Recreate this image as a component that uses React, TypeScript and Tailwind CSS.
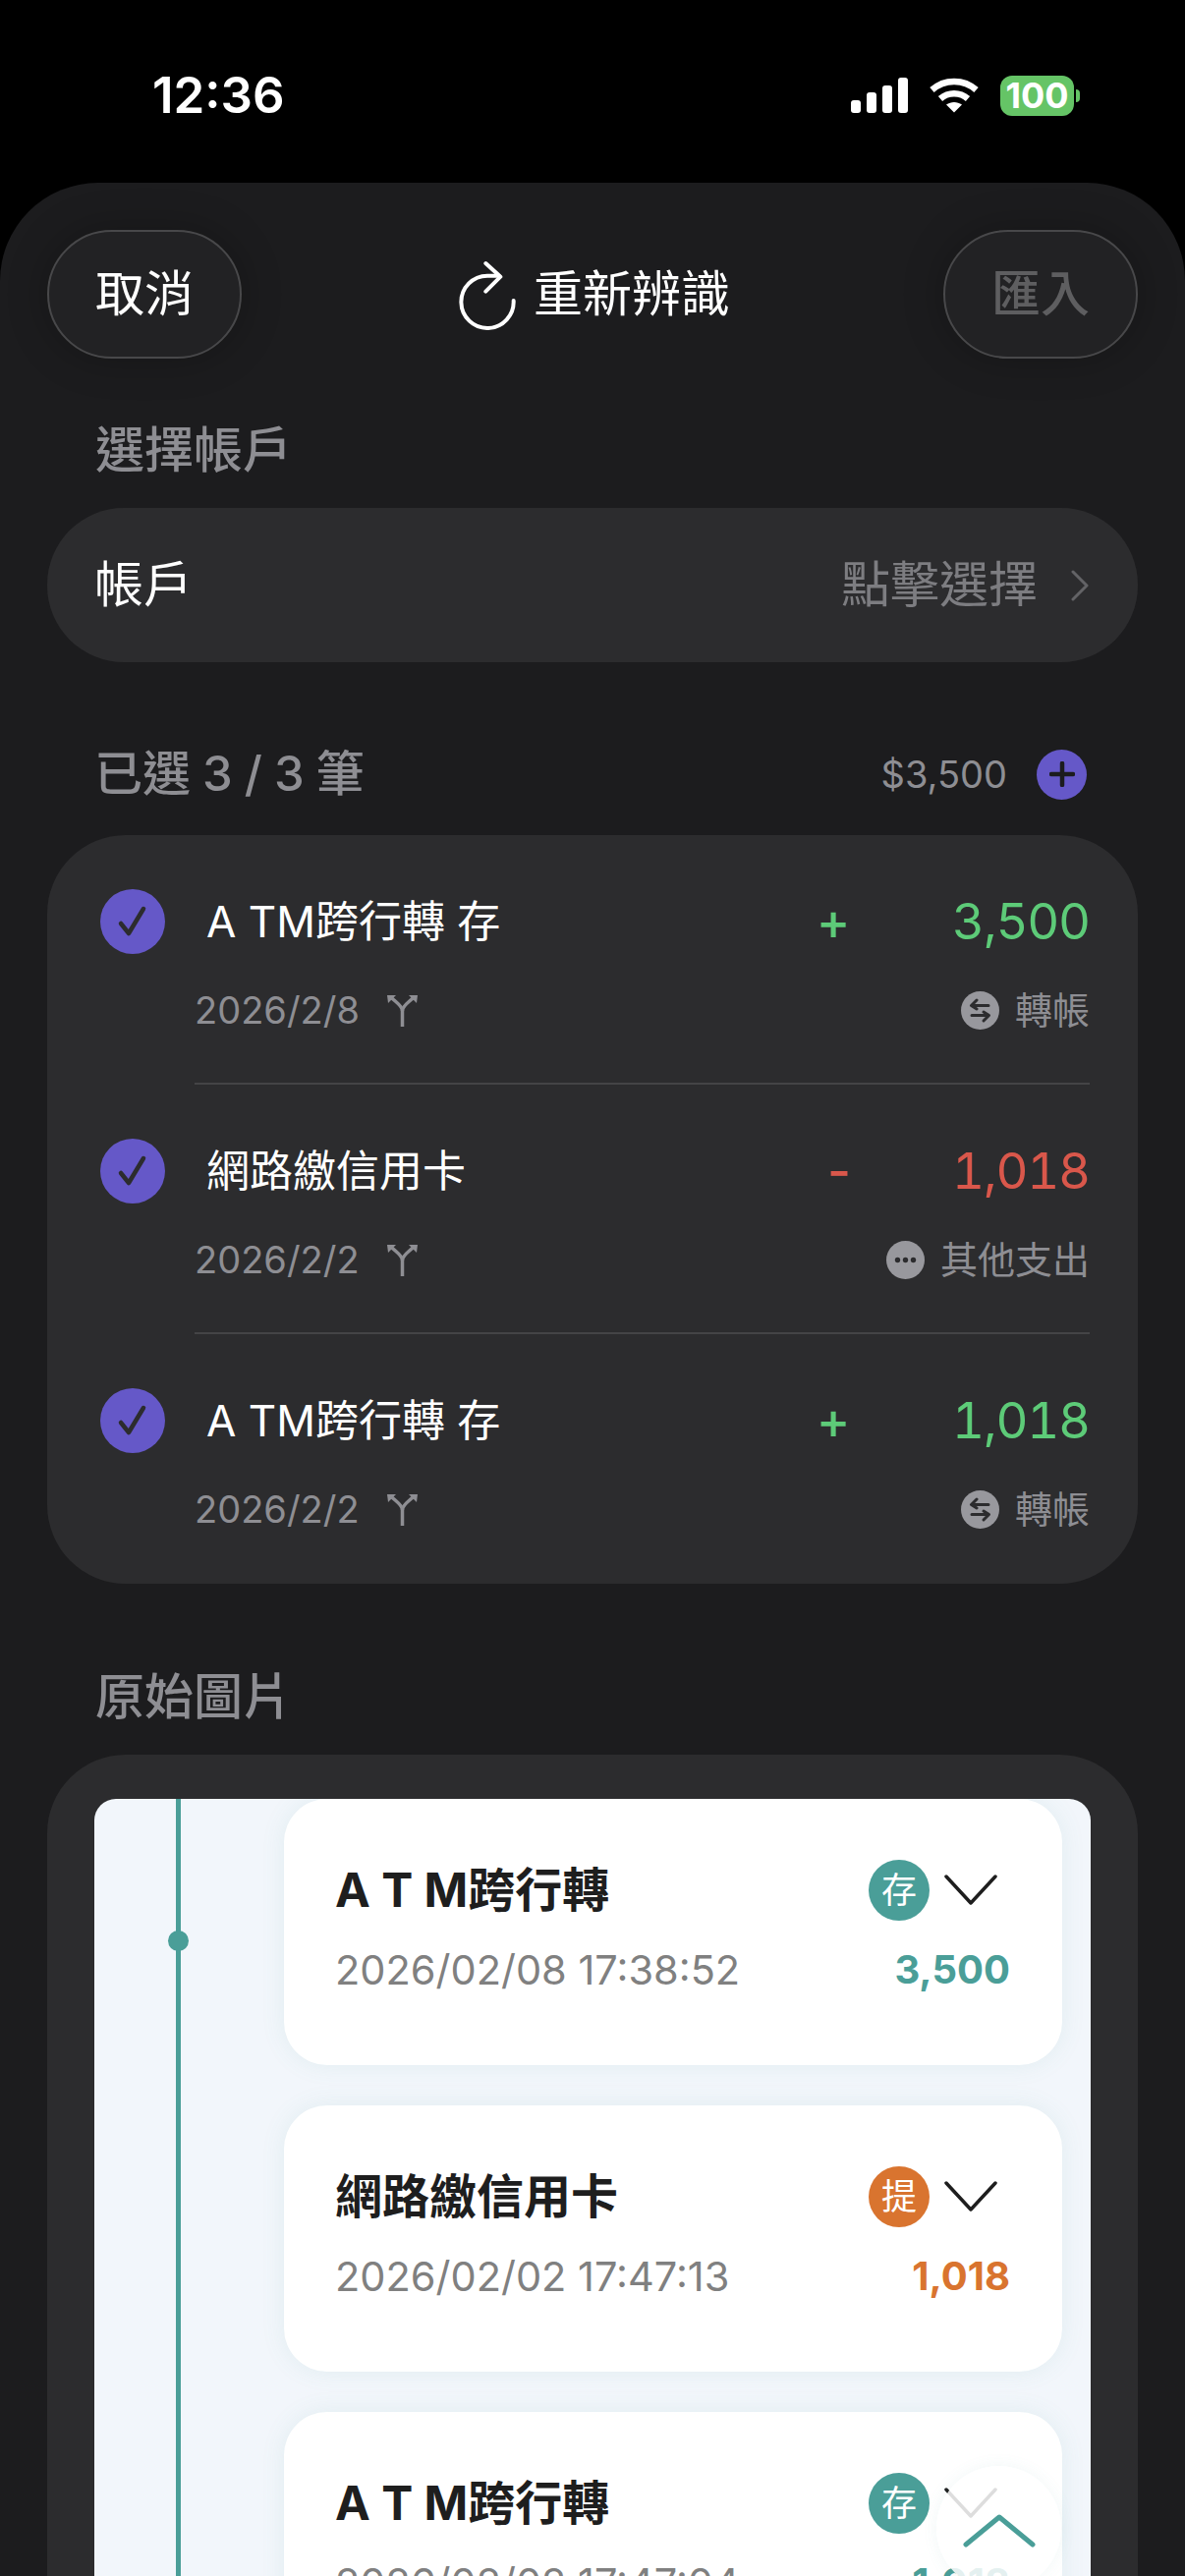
const font = { fontFamily: 'Inter, "Noto Sans CJK TC", sans-serif' };

interface RowData {
  title: string;
  date: string;
  sign: string;
  amount: string;
  tone: string;
  category: string;
  kind: 'transfer' | 'other';
}

const rows: RowData[] = [
  { title: 'A TM跨行轉 存', date: '2026/2/8', sign: '+', amount: '3,500', tone: 'text-[#5dcb78]', category: '轉帳', kind: 'transfer' },
  { title: '網路繳信用卡', date: '2026/2/2', sign: '-', amount: '1,018', tone: 'text-[#d9574b]', category: '其他支出', kind: 'other' },
  { title: 'A TM跨行轉 存', date: '2026/2/2', sign: '+', amount: '1,018', tone: 'text-[#5dcb78]', category: '轉帳', kind: 'transfer' },
];

const slips = [
  { title: 'A T M跨行轉', date: '2026/02/08 17:38:52', badge: '存', amount: '3,500', bg: 'bg-[#4a9e98]', tone: 'text-[#4a9e98]' },
  { title: '網路繳信用卡', date: '2026/02/02 17:47:13', badge: '提', amount: '1,018', bg: 'bg-[#d9742f]', tone: 'text-[#d9742f]' },
  { title: 'A T M跨行轉', date: '2026/02/02 17:47:04', badge: '存', amount: '1,018', bg: 'bg-[#4a9e98]', tone: 'text-[#4a9e98]' },
];

const StatusBar = () => (
  <div className="flex h-[186px] shrink-0 items-start justify-between bg-black pt-[64px] pr-[107px] pl-[155px]">
    <span className="text-[51px] leading-[66px] font-semibold text-white">12:36</span>
    <div className="flex h-[66px] items-center gap-[22px]">
      <svg width="58" height="36" viewBox="0 0 58 36" fill="#fff">
        <rect x="0" y="23" width="10" height="13" rx="3" />
        <rect x="16" y="15" width="10" height="21" rx="3" />
        <rect x="32" y="8" width="10" height="28" rx="3" />
        <rect x="48" y="0" width="10" height="36" rx="3" />
      </svg>
      <svg width="50" height="36" viewBox="0 0 50 36" fill="none" stroke="#fff" strokeWidth="6.5">
        <path d="M2.5 12.5C15 1 35 1 47.5 12.5" />
        <path d="M11 21.5C19 14.5 31 14.5 39 21.5" />
        <path d="M17 27.5L25 35.5L33 27.5C28 24 22 24 17 27.5Z" fill="#fff" stroke="none" />
      </svg>
      <div className="flex items-center gap-[2px]">
        <div className="flex h-[41px] w-[75px] items-center justify-center rounded-[12px] bg-[#65c466] text-[36px] leading-none font-bold text-white">
          100
        </div>
        <div className="h-[13px] w-[4px] rounded-r-full bg-[#65c466]" />
      </div>
    </div>
  </div>
);

const ReloadIcon = () => (
  <svg className="-mt-[4px]" width="64" height="76" viewBox="66 60 192 228" fill="none" stroke="#fff" strokeWidth="12" strokeLinecap="round" strokeLinejoin="round">
    <path d="M245 198A80 80 0 1 1 165 122H200" />
    <path d="M160 84L205 125L160 170" />
  </svg>
);

const PillButton = ({ label, muted }: { label: string; muted?: boolean }) => (
  <button
    className={`flex h-[131px] w-[198px] items-center justify-center rounded-full border-2 border-[#48484a] bg-[#222224] text-[50px] shadow-[0_0_40px_rgba(0,0,0,0.25)] ${
      muted ? 'font-medium text-[#5e5e60]' : 'text-white'
    }`}
  >
    {label}
  </button>
);

const SplitIcon = () => (
  <svg width="33" height="33" viewBox="0 0 33 33" fill="none" stroke="#8e8e93" strokeWidth="3.5">
    <path d="M16.5 33V17C16.5 11 9 8 4 2" />
    <path d="M16.5 17C16.5 11 24 8 29 2" />
    <path d="M1 1H10L2 9Z" fill="#8e8e93" stroke="none" />
    <path d="M32 1H23L31 9Z" fill="#8e8e93" stroke="none" />
  </svg>
);

const CategoryIcon = ({ kind }: { kind: RowData['kind'] }) =>
  kind === 'transfer' ? (
    <svg width="39" height="39" viewBox="0 0 39 39" fill="none" stroke="#2c2c2e" strokeWidth="3" strokeLinecap="round" strokeLinejoin="round">
      <circle cx="19.5" cy="19.5" r="19.5" fill="#98989d" stroke="none" />
      <path d="M28 14.5H11M16 9L10.5 14.5L16 18" />
      <path d="M11 24.5H28M23 21L28.5 24.5L23 30" />
    </svg>
  ) : (
    <svg width="39" height="39" viewBox="0 0 39 39" fill="#2c2c2e">
      <circle cx="19.5" cy="19.5" r="19.5" fill="#98989d" />
      <circle cx="11.5" cy="19.5" r="2.7" />
      <circle cx="19.5" cy="19.5" r="2.7" />
      <circle cx="27.5" cy="19.5" r="2.7" />
    </svg>
  );

const Row = ({ row, last }: { row: RowData; last: boolean }) => (
  <div className="flex pr-[49px] pl-[54px]">
    <div className="mt-[55px] mr-[30px] flex h-[66px] w-[66px] shrink-0 items-center justify-center rounded-full bg-[#6558c8]">
      <svg width="34" height="34" viewBox="0 0 34 34" fill="none" stroke="#2c2c2e" strokeWidth="4.5" strokeLinecap="round" strokeLinejoin="round">
        <path d="M5 19L13 29L28 4" />
      </svg>
    </div>
    <div className={`flex flex-1 flex-col border-b-2 pt-[58px] pb-[44px] ${last ? 'border-transparent' : 'border-[#444446]'}`}>
      <div className="flex h-[60px] items-center">
        <span className="flex-1 pl-[12px] text-[44px] text-white">{row.title}</span>
        <span className={`w-[50px] text-center text-[52px] font-medium ${row.tone} ${row.sign === '-' ? 'pl-[2px]' : 'pr-[10px]'}`}>
          {row.sign}
        </span>
        <span className={`w-[231px] text-right text-[51px] tracking-[-1.2px] tabular-nums ${row.tone}`}>{row.amount}</span>
      </div>
      <div className="mt-[30px] flex h-[60px] items-center justify-between">
        <div className="flex items-center gap-[27px]">
          <span className="text-[38px] text-[#8e8e93]">{row.date}</span>
          <SplitIcon />
        </div>
        <div className="flex items-center gap-[16px]">
          <CategoryIcon kind={row.kind} />
          <span className="text-[38px] text-[#8e8e93]">{row.category}</span>
        </div>
      </div>
    </div>
  </div>
);

const Slip = ({ slip }: { slip: (typeof slips)[number] }) => (
  <div className="h-[271px] rounded-[44px] bg-white pt-[60px] pr-[53px] pl-[52px] shadow-[0_0_24px_rgba(74,158,152,0.1)]">
    <div className="flex h-[66px] items-center">
      <span className="flex-1 text-[48px] font-bold text-[#1e1e1e]">{slip.title}</span>
      <span className={`flex h-[62px] w-[62px] items-center justify-center rounded-full text-[36px] text-white ${slip.bg}`}>
        {slip.badge}
      </span>
      <svg className="mr-[13px] ml-[15px]" width="54" height="34" viewBox="0 0 54 34" fill="none" stroke="#1e1e1e" strokeWidth="3.5" strokeLinecap="round" strokeLinejoin="round">
        <path d="M2 3L27 30L52 3" />
      </svg>
    </div>
    <div className="mt-[15px] flex h-[66px] items-center justify-between">
      <span className="text-[41.5px] text-[#808080]">{slip.date}</span>
      <span className={`text-[40px] font-bold ${slip.tone}`}>{slip.amount}</span>
    </div>
  </div>
);

export default function App() {
  return (
    <div className="relative flex h-[2622px] w-[1206px] flex-col overflow-hidden bg-black" style={font}>
      <StatusBar />

      <div className="flex-1 rounded-t-[100px] bg-[#1c1c1e] px-[48px] pt-[48px]">
        {/* Header */}
        <div className="flex items-center justify-between">
          <PillButton label="取消" />
          <div className="flex items-center gap-[16px] text-[50px] text-white">
            <ReloadIcon />
            <span>重新辨識</span>
          </div>
          <PillButton label="匯入" muted />
        </div>

        {/* Account */}
        <p className="mt-[63px] pl-[49px] text-[50px] leading-[60px] font-medium text-[#8e8e93]">選擇帳戶</p>
        <div className="mt-[29px] flex h-[157px] items-center justify-between rounded-[78px] bg-[#2c2c2e] pr-[50px] pl-[48px]">
          <span className="text-[50px] text-white">帳戶</span>
          <div className="flex items-center gap-[34px]">
            <span className="text-[50px] text-[#7d7d81]">點擊選擇</span>
            <svg width="18" height="32" viewBox="0 0 18 32" fill="none" stroke="#636366" strokeWidth="3" strokeLinecap="round" strokeLinejoin="round">
              <path d="M2 2L16 16L2 30" />
            </svg>
          </div>
        </div>

        {/* Selected rows */}
        <div className="mt-[84px] flex h-[60px] items-center justify-between pr-[52px] pl-[48px]">
          <span className="text-[49px] font-medium text-[#8e8e93] [word-spacing:-1px]">已選 3 / 3 筆</span>
          <div className="flex items-center gap-[30px]">
            <span className="text-[38px] text-[#8e8e93]">$3,500</span>
            <div className="flex h-[51px] w-[51px] items-center justify-center rounded-full bg-[#6558c8]">
              <svg width="26" height="26" viewBox="0 0 26 26" stroke="#1c1c1e" strokeWidth="4.5" strokeLinecap="round">
                <path d="M2 13H24M13 2V24" />
              </svg>
            </div>
          </div>
        </div>
        <div className="mt-[32px] rounded-[80px] bg-[#2c2c2e]">
          {rows.map((row, i) => (
            <Row key={i} row={row} last={i === rows.length - 1} />
          ))}
        </div>

        {/* Original picture */}
        <p className="mt-[85px] pl-[49px] text-[50px] leading-[60px] font-medium text-[#8e8e93]">原始圖片</p>
        <div className="mt-[29px] rounded-t-[80px] bg-[#2c2c2e] px-[48px] pt-[45px]">
          <div className="flex overflow-hidden rounded-t-[22px] bg-[#f2f6fb] pr-[29px]">
            <div className="relative w-[193px] shrink-0">
              <div className="ml-[83px] h-full w-[5px] bg-[#4a9e98]" />
              <div className="absolute top-[134px] left-[75px] h-[21px] w-[21px] rounded-full bg-[#4a9e98]" />
            </div>
            <div className="flex flex-1 flex-col gap-[41px] pb-[60px]">
              {slips.map((slip, i) => (
                <Slip key={i} slip={slip} />
              ))}
            </div>
          </div>
        </div>
      </div>

      {/* Scroll to top */}
      <div className="absolute right-[126px] bottom-[-15px] flex h-[127px] w-[127px] items-start justify-center rounded-full bg-white/85 pt-[48px] shadow-[0_0_16px_rgba(74,158,152,0.08)]">
        <svg width="74" height="36" viewBox="0 0 74 36" fill="none" stroke="#4a9e98" strokeWidth="5" strokeLinecap="round" strokeLinejoin="round">
          <path d="M3 32L37 4L71 32" />
        </svg>
      </div>
    </div>
  );
}
